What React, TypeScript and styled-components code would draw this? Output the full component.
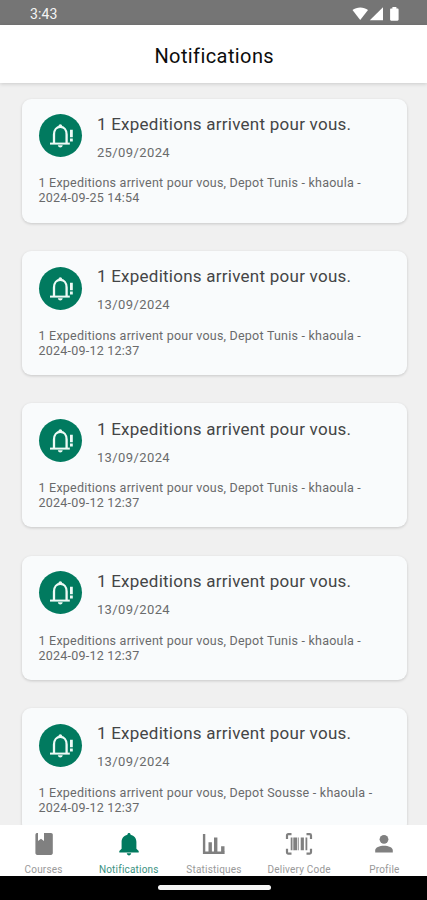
import React from "react";
import styled, { createGlobalStyle } from "styled-components";

const Global = createGlobalStyle`
  *, *::before, *::after { box-sizing: border-box; }
  html, body { margin: 0; padding: 0; }
  body { font-family: Roboto, "Liberation Sans", sans-serif; background: #f0f0f0; }
  svg { display: block; }
`;

const Screen = styled.div`
  display: flex;
  flex-direction: column;
  width: 427px;
  height: 900px;
  overflow: hidden;
  background: #f0f0f0;
`;

const StatusBar = styled.div`
  display: flex;
  flex: none;
  align-items: center;
  justify-content: space-between;
  height: 25px;
  padding: 3px 26px 0 30px;
  background: #757575;
  color: #f4f4f4;
`;

const Clock = styled.span`
  font-size: 14px;
  line-height: 16px;
  letter-spacing: 0.1px;
`;

const Header = styled.header`
  display: flex;
  flex: none;
  align-items: center;
  justify-content: center;
  height: 58px;
  padding: 3px 0 0 1.5px;
  background: #fff;
  box-shadow: 0 1px 4px rgba(0, 0, 0, 0.16);
  z-index: 1;
`;

const Heading = styled.h1`
  margin: 0;
  font-size: 20px;
  line-height: 24px;
  font-weight: 400;
  letter-spacing: 0.4px;
  color: #0c0c0c;
`;

const List = styled.main`
  display: flex;
  flex: 1;
  min-height: 0;
  flex-direction: column;
  gap: 28.4px;
  padding: 15.6px 20.5px 0 21.5px;
  overflow: hidden;
`;

const Card = styled.article`
  flex: none;
  height: 124px;
  padding: 15.2px 17px 0;
  border-radius: 9px;
  background: #f9fbfc;
  box-shadow: 0 1px 3px rgba(0, 0, 0, 0.17);
`;

const CardTop = styled.div`
  display: flex;
  gap: 15.4px;
  height: 61.6px;
`;

const Badge = styled.div`
  display: flex;
  flex: none;
  align-items: center;
  justify-content: center;
  width: 43px;
  height: 43px;
  margin-top: 0.5px;
  border-radius: 50%;
  background: #017a5f;
`;

const CardTitle = styled.h2`
  margin: 0;
  font-size: 17px;
  line-height: 20px;
  font-weight: 400;
  letter-spacing: 0.25px;
  white-space: nowrap;
  color: #444546;
`;

const CardDate = styled.time`
  display: block;
  margin-top: 11px;
  font-size: 13px;
  line-height: 16px;
  letter-spacing: 0.4px;
  color: #6a6b6c;
`;

const Body = styled.p`
  margin: 0;
  font-size: 12.5px;
  line-height: 15px;
  letter-spacing: 0.23px;
  white-space: pre-line;
  color: #696a6b;
`;

const Nav = styled.nav`
  display: grid;
  flex: none;
  grid-template-columns: repeat(5, 1fr);
  height: 51px;
  padding-left: 1px;
  overflow: hidden;
  background: #fff;
`;

const Tab = styled.div<{ $active?: boolean }>`
  display: flex;
  flex-direction: column;
  align-items: center;
  padding-top: 5px;
  gap: 6px;
  color: ${(p) => (p.$active ? "#017a5f" : "#808080")};
`;

const TabLabel = styled.span<{ $active?: boolean }>`
  font-size: 10px;
  line-height: 12px;
  letter-spacing: 0.2px;
  white-space: nowrap;
  color: ${(p) => (p.$active ? "#3b927f" : "#999")};
`;

const SystemBar = styled.div`
  display: flex;
  flex: none;
  justify-content: center;
  height: 24px;
  padding: 9px 0 0 1px;
  background: #000;
`;

const HomeHandle = styled.div`
  width: 113px;
  height: 5px;
  border-radius: 3px;
  background: #f6f6f6;
`;

const StatusIcons = () => (
  <svg width="50" height="16" viewBox="0 0 50 16" fill="#fff">
    <path d="M1.5 4.1C5.5.5 13 .5 17 4.1L9.2 14.1Z" />
    <path d="M32 1.2V14.3H18.8Z" />
    <path d="M40.2 2.5h1.2V1h4v1.5h1.1c.7 0 1.1.5 1.1 1.1v10c0 .7-.4 1.1-1.1 1.1h-6.3c-.7 0-1.1-.4-1.1-1.1v-10c0-.6.4-1.1 1.1-1.1Z" />
  </svg>
);

const AlertBell = () => (
  <svg width="43" height="43" viewBox="0 0 43 43" fill="none" stroke="#eefaf6">
    <path d="M11 29.6H30.8" strokeWidth="2" />
    <path d="M15 29V20.5C15 15.7 17.8 12.9 21.3 12.9S27.6 15.7 27.6 20.5V29" strokeWidth="2.3" />
    <path d="M19.4 12.6c0-3.1 3.8-3.1 3.8 0Z" fill="#eefaf6" stroke="none" />
    <path d="M18.9 31.2h4.8c-.4 3-4.4 3-4.8 0Z" fill="#eefaf6" stroke="none" />
    <path d="M32.4 15.8v7.4M32.4 24.6v2.8" strokeWidth="2.8" />
  </svg>
);

const Book = () => (
  <svg width="28" height="28" viewBox="0 0 28 28" fill="currentColor">
    <path d="M6.6 3H8v8.1l3-2.3 3 2.3V3h7c1.1 0 1.8.7 1.8 1.8v18.3c0 1.1-.7 1.8-1.8 1.8H7.2c-1.1 0-1.8-.7-1.8-1.8V4.8c0-.9.4-1.5 1.2-1.8Z" />
  </svg>
);

const Bell = () => (
  <svg width="28" height="28" viewBox="0 0 28 28" fill="currentColor">
    <path d="M12.4 4.8c0-2.5 3.2-2.5 3.2 0 3.6.8 5.8 3.6 5.8 7.2v6.7l2.3 2.2v1.5H4.3v-1.5l2.3-2.2V12c0-3.6 2.2-6.4 5.8-7.2ZM11.8 23.3h4.4c-.3 2.8-4.1 2.8-4.4 0Z" />
  </svg>
);

const Chart = () => (
  <svg width="28" height="28" viewBox="0 0 28 28" fill="none" stroke="currentColor">
    <path d="M4.1 4v18.7h20.5" strokeWidth="2.4" />
    <path d="M10.2 22V12.3M15.7 22V7.5M22.8 22V16.3" strokeWidth="3.4" />
  </svg>
);

const Barcode = () => (
  <svg width="28" height="28" viewBox="0 0 28 28" fill="none" stroke="currentColor">
    <path d="M6.5 4.2H3.3Q2 4.2 2 5.5V9M21.5 4.2h3.2Q26 4.2 26 5.5V9M6.5 23.6H3.3Q2 23.6 2 22.3V18.8M21.5 23.6h3.2Q26 23.6 26 22.3V18.8" strokeWidth="2.2" />
    <path d="M6.6 7.5v12.8M21.4 7.5v12.8" strokeWidth="1.8" />
    <path d="M10.6 7.5v12.8M17.3 7.5v12.8" strokeWidth="3.2" />
    <path d="M8.6 7.5v12.8M13.4 7.5v12.8" strokeWidth="0.8" />
  </svg>
);

const Person = () => (
  <svg width="28" height="28" viewBox="0 0 28 28" fill="currentColor">
    <circle cx="14" cy="9.3" r="4.4" />
    <path d="M5.2 22.4v-2c0-6.3 17.6-6.3 17.6 0v2Z" />
  </svg>
);

const notifications = [
  { date: "25/09/2024", depot: "Tunis", stamp: "2024-09-25 14:54" },
  { date: "13/09/2024", depot: "Tunis", stamp: "2024-09-12 12:37" },
  { date: "13/09/2024", depot: "Tunis", stamp: "2024-09-12 12:37" },
  { date: "13/09/2024", depot: "Tunis", stamp: "2024-09-12 12:37" },
  { date: "13/09/2024", depot: "Sousse", stamp: "2024-09-12 12:37" },
];

const tabs = [
  { label: "Courses", Icon: Book },
  { label: "Notifications", Icon: Bell, active: true },
  { label: "Statistiques", Icon: Chart },
  { label: "Delivery Code", Icon: Barcode },
  { label: "Profile", Icon: Person },
];

export default function App() {
  return (
    <Screen>
      <Global />
      <StatusBar>
        <Clock>3:43</Clock>
        <StatusIcons />
      </StatusBar>
      <Header>
        <Heading>Notifications</Heading>
      </Header>
      <List>
        {notifications.map((n, i) => (
          <Card key={i}>
            <CardTop>
              <Badge>
                <AlertBell />
              </Badge>
              <div>
                <CardTitle>1 Expeditions arrivent pour vous.</CardTitle>
                <CardDate>{n.date}</CardDate>
              </div>
            </CardTop>
            <Body>{`1 Expeditions arrivent pour vous, Depot ${n.depot} - khaoula -\n${n.stamp}`}</Body>
          </Card>
        ))}
      </List>
      <Nav>
        {tabs.map(({ label, Icon, active }) => (
          <Tab key={label} $active={active}>
            <Icon />
            <TabLabel $active={active}>{label}</TabLabel>
          </Tab>
        ))}
      </Nav>
      <SystemBar>
        <HomeHandle />
      </SystemBar>
    </Screen>
  );
}
